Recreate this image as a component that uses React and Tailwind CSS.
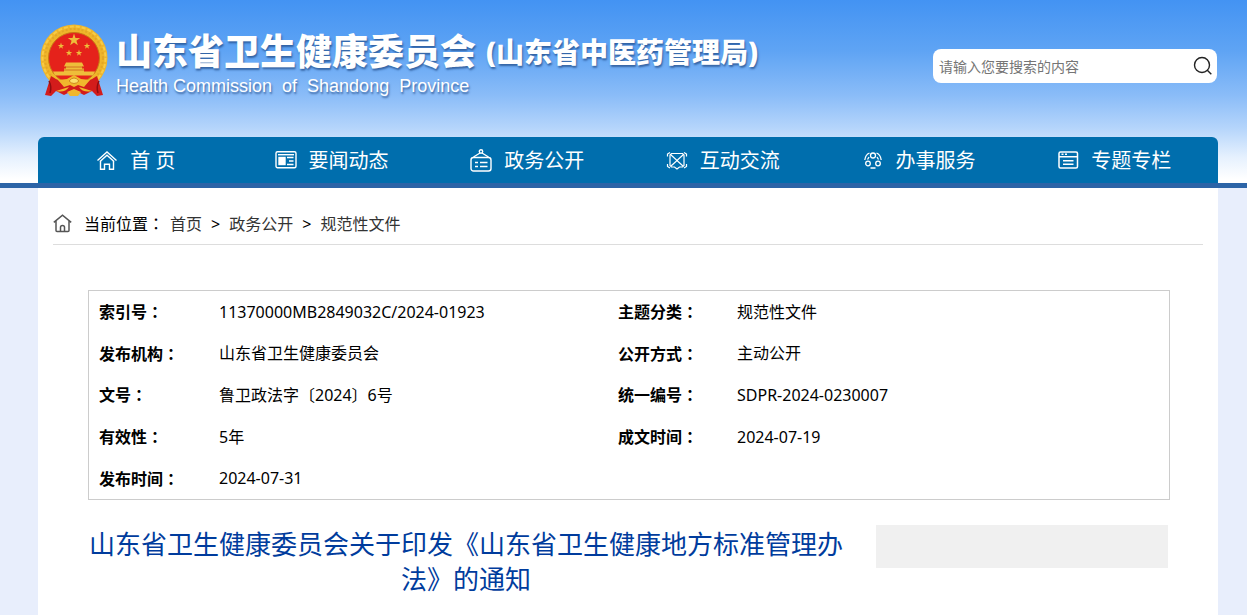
import React from 'react'

const iconProps = {
  width: 22,
  height: 24,
  viewBox: '0 0 22 24',
  fill: 'none',
  stroke: 'currentColor',
  strokeWidth: 1.4,
  'aria-hidden': true,
}

const NavHomeIcon = () => (
  <svg {...iconProps}>
    <path d="M1.5 11.5 11 3l9.500 8.500M4 12.500l7-6.300 7 6.300" />
    <path d="M4.500 12v8.300h4v-5h5v5h4V12" />
  </svg>
)

const NewsIcon = () => (
  <svg {...iconProps}>
    <rect x="1" y="2.700" width="20" height="16" rx="1.500" />
    <path d="M3 5.700h16" />
    <rect x="4" y="8.500" width="6" height="7" fill="currentColor" />
    <path d="M12 8.500h6.500M14 12h4.500M12 15.500h6.500" />
  </svg>
)

const BoardIcon = () => (
  <svg {...iconProps}>
    <rect x="1" y="8.500" width="20" height="13.500" rx="2.500" />
    <circle cx="11" cy="2.500" r="1.700" />
    <path d="M3.500 8 10 4M18.500 8 12 4" />
    <path d="M5 13.500h3M10 13.500h7.500M5 17.500h3M10 17.500h7.500" />
  </svg>
)

const ExchangeIcon = () => (
  <svg {...iconProps} strokeWidth="1.200">
    <path d="M5.500 4.500h11l1.500 1.500v10.500L16.500 18h-3L11 20l-2.500-2h-3L4 16.500V6Z" />
    <path d="m4.500 5.500 6.500 6 6.500-6M5 17l6-5.500 6 5.500" />
    <path d="M1.500 7.500V5L4 3.500M20.500 7.500V5L18 3.500M1.500 15v2.500L4 19M20.500 15v2.500L18 19" />
  </svg>
)

const ServiceIcon = () => (
  <svg {...iconProps} strokeWidth="1.300">
    <circle cx="11" cy="6.500" r="2.500" />
    <circle cx="6" cy="14.500" r="2.300" />
    <circle cx="16" cy="14.500" r="2.300" />
    <path d="M7.500 4Q3.500 5.500 2.800 11M14.500 4q4 1.500 4.700 7M5.500 10.500 7 8M16.500 10.500 15 8M8.500 19h5" />
  </svg>
)

const TopicIcon = () => (
  <svg {...iconProps} strokeWidth="1.500">
    <rect x="2" y="3" width="18.500" height="16" rx="1.500" />
    <path d="M2 7.700h18M4.500 5.300h2M8 5.300h2M6 11.700h10.500M6 15.200h10.500" />
  </svg>
)

const HomeIcon = () => (
  <svg width="19" height="19" viewBox="0 0 19 19" fill="none" stroke="#555" strokeWidth="1.500" aria-hidden="true">
    <path d="M.8 8.300 9.500 1.200l8.700 7.100M3 7v9.500q0 1 1 1h11q1 0 1-1V7" />
    <path d="M7.500 17.300v-4q0-1.800 2-1.800t2 1.800v4" />
  </svg>
)

const star = 'M0-10 2.300-3.100H9.500L3.700 1.200 5.900 8.100 0 3.800-5.900 8.100-3.700 1.200-9.500-3.100H-2.300Z'

const Emblem = () => (
  <svg width="68" height="74" viewBox="0 0 68 74" role="img" aria-label="国徽" className="shrink-0">
    <circle cx="34" cy="34" r="33.500" fill="#efb52a" />
    <circle cx="34" cy="34" r="29" fill="none" stroke="#e3a726" strokeWidth="2" strokeDasharray="2 2" />
    <circle cx="34" cy="34" r="31.500" fill="none" stroke="#f8cb45" strokeWidth="2" strokeDasharray="4 2" />
    <circle cx="34" cy="34" r="25.500" fill="#e5221b" stroke="#c77816" />
    <g fill="#eebd3a">
      <path d={star} transform="translate(34 16) scale(.65)" />
      <path d={star} transform="translate(21 22) scale(.34)" />
      <path d={star} transform="translate(47 22) scale(.34)" />
      <path d={star} transform="translate(29 29) scale(.34)" />
      <path d={star} transform="translate(39 29) scale(.34)" />
      <path d="M26 38.500h16l2 4H24ZM26 42h16v3H26ZM24 44.500h20v4H24ZM13 47.500h42l-2 4H15Z" />
    </g>
    <path d="M25 43h18M24 46h20" stroke="#c9601a" strokeWidth=".8" />
    <path d="M11 52q9 6 15 6l8-5 8 5q6 0 15-6l6 19-6 1-5-5-8 4-10-5-10 5-8-4-5 5-6-1Z" fill="#d31c1b" />
    <path d="m18 56 9-1 7-4 7 4 9 1-6 7-6-2-4 2-4-2-6 2ZM16 67q9 2 13-4M52 67q-9 2-13-4M27 68l7-3 7 3-3 4h-8Z" fill="#f0b72d" />
    <path d="M9 57q3 6 1 12M59 57q-3 6-1 12" fill="none" stroke="#8d0d10" strokeWidth="1.500" />
    <path d="M29 57q5-6 10 0-5 5-10 0Z" fill="#fbe06b" stroke="#c77816" strokeWidth=".8" />
  </svg>
)

const navItems = [
  { label: '首 页', Icon: NavHomeIcon },
  { label: '要闻动态', Icon: NewsIcon },
  { label: '政务公开', Icon: BoardIcon },
  { label: '互动交流', Icon: ExchangeIcon },
  { label: '办事服务', Icon: ServiceIcon },
  { label: '专题专栏', Icon: TopicIcon },
]

const infoRows = [
  ['索引号', '11370000MB2849032C/2024-01923', '主题分类', '规范性文件'],
  ['发布机构', '山东省卫生健康委员会', '公开方式', '主动公开'],
  ['文号', '鲁卫政法字〔2024〕6号', '统一编号', 'SDPR-2024-0230007'],
  ['有效性', '5年', '成文时间', '2024-07-19'],
  ['发布时间', '2024-07-31'],
]

// the TC face centres the full-width colon
const Colon = () => <span className="font-['Noto_Sans_CJK_TC',sans-serif]">：</span>

const Header = () => (
  <header className="border-b-[5px] border-[#2c64a7] bg-[linear-gradient(to_bottom,#4393f3_0%,#5fa4f4_28%,#8abcf8_52%,#b5d5fb_70%,#e6f1fe_86%,#ffffff_98%)] pl-[9px]">
    <div className="mx-auto max-w-[1180px]">
      <div className="flex items-start justify-between pt-6 h-[137px]">
        <a href="#" className="flex gap-2 pl-0.5 text-white">
          <Emblem />
          <div className="pt-0.5 [text-shadow:1px_2px_2px_rgba(30,70,130,0.7)]">
            <h1 className="flex items-center gap-2.5 whitespace-nowrap font-black leading-[52px]">
              <span className="text-4xl leading-[52px]">山东省卫生健康委员会</span>
              <span className="text-[28px] leading-[52px]">(山东省中医药管理局)</span>
            </h1>
            <p className="whitespace-pre font-['Liberation_Sans',sans-serif] text-lg leading-4">Health Commission  of  Shandong  Province</p>
          </div>
        </a>
        <form onSubmit={(e) => e.preventDefault()} className="mt-[25px] mr-px flex h-[34px] w-[284px] items-center rounded-lg bg-white">
          <input
            type="text"
            aria-label="搜索"
            placeholder="请输入您要搜索的内容"
            className="min-w-0 flex-1 pt-0.5 pl-1.5 text-sm text-gray-800 outline-none placeholder:text-[#757575]"
          />
          <button type="submit" aria-label="搜索" className="flex w-7 justify-center text-[#222]">
            <svg width="20" height="20" viewBox="0 0 20 20" fill="none" stroke="currentColor" strokeWidth="1.400" aria-hidden="true">
              <circle cx="9" cy="9" r="7.500" />
              <path d="m14.300 14.300 4 4" />
            </svg>
          </button>
        </form>
      </div>
      <nav className="flex h-[46px] rounded-t-md bg-[#006ead] pt-0.5 pr-1.5">
        {navItems.map(({ label, Icon }) => (
          <a key={label} href="#" className="flex flex-1 items-center justify-center gap-3 whitespace-nowrap text-xl text-white">
            <Icon />
            {label}
          </a>
        ))}
      </nav>
    </div>
  </header>
)

const Breadcrumb = () => (
  <div className="flex items-center border-b border-[#ddd] pt-[19px] pb-1 leading-8 text-black">
    <HomeIcon />
    <span className="ml-3 mr-1.5">当前位置<Colon /></span>
    <div className="flex gap-[9px]">
      <a href="#" className="text-[#333]">首页</a>
      <span>&gt;</span>
      <a href="#" className="text-[#333]">政务公开</a>
      <span>&gt;</span>
      <a href="#" className="text-[#333]">规范性文件</a>
    </div>
  </div>
)

const InfoTable = () => (
  <div className="border border-[#ccc] px-2.5">
    <table className="h-[208px] w-full table-fixed text-left leading-6 text-black">
      <colgroup>
        <col className="w-[120px]" />
        <col className="w-[399px]" />
        <col className="w-[119px]" />
        <col />
      </colgroup>
      <tbody>
        {infoRows.map(([label, value, label2, value2]) => (
          <tr key={label}>
            <th className="font-bold">{label}<Colon /></th>
            <td>{value}</td>
            {label2 && <th className="font-bold">{label2}<Colon /></th>}
            {label2 && <td>{value2}</td>}
          </tr>
        ))}
      </tbody>
    </table>
  </div>
)

const App = () => {
  return (
    <div className="min-h-screen bg-[#e8eefc] font-['Noto_Sans','Noto_Sans_CJK_SC',sans-serif] text-base">
      <Header />
      <div className="pl-[9px]">
        <main className="mx-auto min-h-[427px] max-w-[1180px] bg-white px-[15px]">
          <Breadcrumb />
          <div className="mt-[45px] pr-[33px] pl-[35px]">
            <InfoTable />
            <div className="mt-[25px] flex items-start gap-8 pr-0.5">
              <h2 className="flex-1 pt-0.5 text-center text-[26px] leading-[35px] text-[#003c9d]">
                山东省卫生健康委员会关于印发《山东省卫生健康地方标准管理办法》的通知
              </h2>
              <aside className="h-[43px] w-[292px] bg-[#f0f0f0]"></aside>
            </div>
          </div>
        </main>
      </div>
    </div>
  )
}

export default App
